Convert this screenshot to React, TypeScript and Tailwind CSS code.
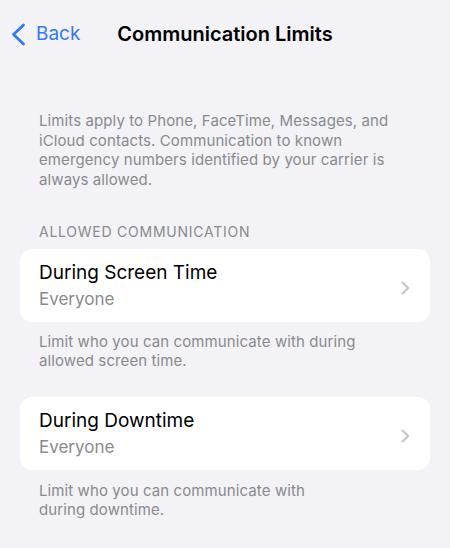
const font = { fontFamily: 'Inter, "Noto Sans", sans-serif' }

function Row({ title, value }: { title: string; value: string }) {
  return (
    <div className="mx-5 flex items-center rounded-xl bg-white pl-[19px] pr-5 pt-3 pb-3">
      <div className="flex-1">
        <p className="text-[19px] leading-6 text-black">{title}</p>
        <p className="mt-[3px] text-[17px] leading-[22px] text-[#8a8a8e]">{value}</p>
      </div>
      <svg width="9" height="14" viewBox="0 0 9 14" fill="none" className="mt-1">
        <path d="M1.5 1.5 L7.2 7 L1.5 12.5" stroke="#c4c4c7" strokeWidth="2" strokeLinecap="round" strokeLinejoin="round" />
      </svg>
    </div>
  )
}

export default function App() {
  return (
    <main className="min-h-screen w-[450px] h-[548px] overflow-hidden bg-[#f2f2f7]" style={font}>
      {/* Nav bar */}
      <div className="grid h-[68px] grid-cols-[1fr_auto_1fr] items-center">
        <div className="flex items-center pl-[11px] text-[#3478f6]">
          <svg width="15" height="23" viewBox="0 0 15 23" fill="none">
            <path d="M12.5 2 L2.5 11.5 L12.5 21" stroke="currentColor" strokeWidth="2.8" strokeLinecap="round" strokeLinejoin="round" />
          </svg>
          <span className="ml-[10px] text-[19px]">Back</span>
        </div>
        <h1 className="text-[20px] font-semibold text-black">Communication Limits</h1>
        <div />
      </div>

      <p className="mt-[43px] px-[39px] text-[15px] leading-[19.5px] tracking-[0.1px] text-[#8a8a8e]">
        Limits apply to Phone, FaceTime, Messages, and<br />
        iCloud contacts. Communication to known<br />
        emergency numbers identified by your carrier is<br />
        always allowed.
      </p>

      <p className="mt-[34px] mb-2 px-[39px] text-[14px] leading-[18px] tracking-[0.75px] text-[#8a8a8e]">
        ALLOWED COMMUNICATION
      </p>
      <Row title="During Screen Time" value="Everyone" />
      <p className="mt-[10px] px-[39px] text-[15px] leading-[19px] tracking-[0.1px] text-[#8a8a8e]">
        Limit who you can communicate with during<br />
        allowed screen time.
      </p>

      <div className="mt-[27px]">
        <Row title="During Downtime" value="Everyone" />
      </div>
      <p className="mt-[11px] px-[39px] text-[15px] leading-[19px] tracking-[0.1px] text-[#8a8a8e]">
        Limit who you can communicate with<br />
        during downtime.
      </p>
    </main>
  )
}
